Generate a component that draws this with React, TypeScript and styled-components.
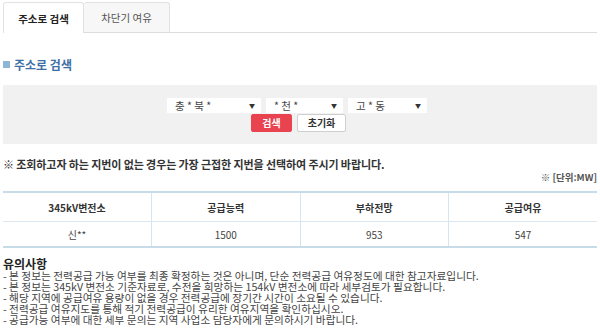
import { styled, createGlobalStyle } from "styled-components";

const GlobalStyle = createGlobalStyle`
  html, body {
    margin: 0;
    padding: 0;
    background: #fff;
  }
  body {
    font-family: "Noto Sans CJK KR", "Noto Sans", sans-serif;
    color: #333;
  }
  ul {
    margin: 0;
    padding: 0;
    list-style: none;
  }
`;

const tabs = [
  { id: 1, label: "주소로 검색", active: true },
  { id: 2, label: "차단기 여유", active: false },
];

const selects = [
  { id: 1, label: "충 * 북 *", width: 94 },
  { id: 2, label: "* 천 *", width: 77 },
  { id: 3, label: "고 * 동", width: 79 },
];

const columns = ["345kV변전소", "공급능력", "부하전망", "공급여유"];
const rows = [{ id: 1, cells: ["신**", "1500", "953", "547"] }];

const notes = [
  "- 본 정보는 전력공급 가능 여부를 최종 확정하는 것은 아니며, 단순 전력공급 여유정도에 대한 참고자료입니다.",
  "- 본 정보는 345kV 변전소 기준자료로, 수전을 희망하는 154kV 변전소에 따라 세부검토가 필요합니다.",
  "- 해당 지역에 공급여유 용량이 없을 경우 전력공급에 장기간 시간이 소요될 수 있습니다.",
  "- 전력공급 여유지도를 통해 적기 전력공급이 유리한 여유지역을 확인하십시오.",
  "- 공급가능 여부에 대한 세부 문의는 지역 사업소 담당자에게 문의하시기 바랍니다.",
];

export default function App() {
  return (
    <Page>
      <GlobalStyle />
      <TabBar>
        {tabs.map((tab) => (
          <Tab key={tab.id} $active={tab.active}>
            {tab.label}
          </Tab>
        ))}
      </TabBar>
      <SectionTitle>
        <TitleMark />
        주소로 검색
      </SectionTitle>
      <SearchBox>
        <SelectRow>
          {selects.map((item) => (
            <FakeSelect key={item.id} $width={item.width}>
              <span>{item.label}</span>
              <Arrow>▼</Arrow>
            </FakeSelect>
          ))}
        </SelectRow>
        <ButtonRow>
          <Button $primary>검색</Button>
          <Button>초기화</Button>
        </ButtonRow>
      </SearchBox>
      <Notice>※ 조회하고자 하는 지번이 없는 경우는 가장 근접한 지번을 선택하여 주시기 바랍니다.</Notice>
      <Unit>※ [단위:MW]</Unit>
      <Table>
        <thead>
          <tr>
            {columns.map((col) => (
              <th key={col}>{col}</th>
            ))}
          </tr>
        </thead>
        <tbody>
          {rows.map((row) => (
            <tr key={row.id}>
              {row.cells.map((cell, i) => (
                <td key={i}>{cell}</td>
              ))}
            </tr>
          ))}
        </tbody>
      </Table>
      <NoteTitle>유의사항</NoteTitle>
      <NoteList>
        {notes.map((note) => (
          <li key={note}>{note}</li>
        ))}
      </NoteList>
    </Page>
  );
}

const Page = styled.div`
  width: 594px;
  padding: 2px 3px 0 3px;
`;

const TabBar = styled.div`
  display: flex;
  border-bottom: 1px solid #dcdcdc;
  height: 30px;
`;

const Tab = styled.div<{ $active?: boolean }>`
  display: flex;
  align-items: center;
  justify-content: center;
  box-sizing: border-box;
  width: ${({ $active }) => ($active ? "81px" : "86px")};
  height: ${({ $active }) => ($active ? "31px" : "30px")};
  margin-bottom: ${({ $active }) => ($active ? "-1px" : "0")};
  border: 1px solid #e2e2e2;
  border-bottom: none;
  border-left-width: ${({ $active }) => ($active ? "1px" : "0")};
  border-radius: 3px 3px 0 0;
  background: ${({ $active }) => ($active ? "#fff" : "#f7f7f7")};
  font-size: 10.5px;
  font-weight: ${({ $active }) => ($active ? 700 : 400)};
  color: ${({ $active }) => ($active ? "#222" : "#555")};
  white-space: nowrap;
`;

const SectionTitle = styled.h2`
  display: flex;
  align-items: center;
  gap: 4px;
  margin: 21px 0 0 0;
  height: 20px;
  font-size: 12px;
  font-weight: 700;
  color: #3d6fa6;
`;

const TitleMark = styled.span`
  display: inline-block;
  width: 7px;
  height: 7px;
  background: #8db6d6;
`;

const SearchBox = styled.div`
  margin-top: 11px;
  height: 59px;
  background: #f1f1f1;
  display: flex;
  flex-direction: column;
  align-items: center;
  padding-top: 13px;
  box-sizing: border-box;
  gap: 1px;
`;

const SelectRow = styled.div`
  display: flex;
  gap: 5px;
  margin-left: -6px;
`;

const FakeSelect = styled.div<{ $width: number }>`
  width: ${({ $width }) => $width}px;
  height: 15px;
  background: #fff;
  display: flex;
  align-items: center;
  justify-content: space-between;
  padding: 0 6px 0 8px;
  box-sizing: border-box;
  font-size: 10.5px;
  color: #444;
  white-space: pre;
`;

const Arrow = styled.span`
  font-size: 6px;
  color: #333;
`;

const ButtonRow = styled.div`
  display: flex;
  gap: 5px;
  margin-left: -3px;
`;

const Button = styled.button<{ $primary?: boolean }>`
  height: 18px;
  padding: 0;
  width: ${({ $primary }) => ($primary ? "41px" : "49px")};
  border: 1px solid ${({ $primary }) => ($primary ? "#e8434f" : "#cfcfcf")};
  border-radius: 2px;
  background: ${({ $primary }) => ($primary ? "#e8434f" : "#fff")};
  color: ${({ $primary }) => ($primary ? "#fff" : "#333")};
  font-family: inherit;
  font-size: 10px;
  font-weight: 700;
  line-height: 16px;
`;

const Notice = styled.p`
  margin: 13px 0 0 0;
  font-size: 11px;
  line-height: 14px;
  font-weight: 700;
  color: #333;
  letter-spacing: -0.1px;
`;

const Unit = styled.p`
  margin: 0;
  text-align: right;
  font-size: 9.5px;
  line-height: 12px;
  font-weight: 700;
  color: #555;
`;

const Table = styled.table`
  width: 594px;
  margin-top: 8px;
  border-collapse: collapse;
  table-layout: fixed;
  border-top: 2px solid #c8dbe9;
  border-bottom: 2px solid #c8dbe9;
  font-size: 10px;
  th,
  td {
    text-align: center;
    border-left: 1px solid #d6e4ee;
    padding: 0;
  }
  th:first-child,
  td:first-child {
    border-left: none;
  }
  th {
    height: 28px;
    font-weight: 700;
    color: #333;
    border-bottom: 1px solid #dbe6ee;
  }
  td {
    height: 24px;
    color: #444;
  }
`;

const NoteTitle = styled.h3`
  margin: 9px 0 0 0;
  font-size: 12px;
  line-height: 13px;
  font-weight: 700;
  color: #222;
`;

const NoteList = styled.ul`
  font-size: 10.7px;
  line-height: 11px;
  color: #444;
  li {
    white-space: nowrap;
  }
`;
